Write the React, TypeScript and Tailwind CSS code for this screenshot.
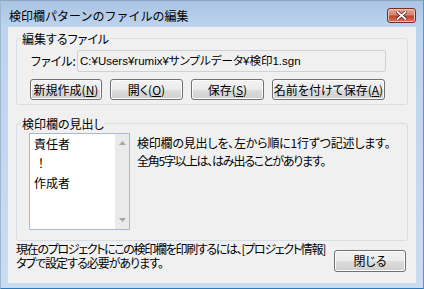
import { ReactNode } from "react";

function Mnemonic({ text, k }: { text: string; k: string }) {
  return (
    <>
      {text}(<span className="underline underline-offset-[1px]">{k}</span>)
    </>
  );
}

function Button({ children, className = "" }: { children: ReactNode; className?: string }) {
  return (
    <button
      type="button"
      className={`flex shrink-0 items-center justify-center rounded-[3px] border border-[#707070] bg-[linear-gradient(#f2f2f2_0%,#ebebeb_50%,#dddddd_50%,#cfcfcf_100%)] leading-[14px] shadow-[inset_0_0_0_1px_#fcfcfc] ${className}`}
    >
      {children}
    </button>
  );
}

function CloseButton() {
  return (
    <div className="mr-[7px] mt-[7px] flex h-[15px] w-[29px] shrink-0 items-center justify-center rounded-[3px] border border-[#7a2c22] bg-[linear-gradient(#e9a99b_0%,#d9826e_45%,#c2432c_55%,#d8765e_100%)] shadow-[inset_0_0_0_1px_#eec0b5]">
      <svg width="11" height="9" viewBox="0 0 11 9">
        <path d="M1.5 1 L9.5 8 M9.5 1 L1.5 8" stroke="#5a1d15" strokeWidth="3.4" strokeLinecap="square" />
        <path d="M1.5 1 L9.5 8 M9.5 1 L1.5 8" stroke="#ffffff" strokeWidth="1.8" strokeLinecap="square" />
      </svg>
    </div>
  );
}

function Scrollbar() {
  return (
    <div className="flex h-full w-[14px] shrink-0 flex-col items-center justify-between bg-[#eaeaea] py-[7px]">
      <svg width="7" height="4" viewBox="0 0 7 4">
        <path d="M0 4 L3.5 0 L7 4 Z" fill="#a6a6a6" />
      </svg>
      <svg width="7" height="4" viewBox="0 0 7 4">
        <path d="M0 0 L3.5 4 L7 0 Z" fill="#a6a6a6" />
      </svg>
    </div>
  );
}

export default function App() {
  return (
    <div className="flex h-[289px] w-[424px] flex-col border border-t-[#8fa5bd] border-l-[#9fb6d0] border-r-[#3aa2dc] border-b-[#2b79b8] bg-[linear-gradient(#a9c3e2,#bdd4ee_26px,#c9dcf1)] font-['Noto_Sans_CJK_JP',sans-serif] text-[12px] text-black">
      <div className="flex h-[26px] shrink-0 items-start justify-between">
        <span className="ml-[8px] mt-[8px] leading-[14px]">検印欄パターンのファイルの編集</span>
        <CloseButton />
      </div>

      <div className="mx-[7px] flex h-[256px] shrink-0 flex-col bg-[#f0f0f0] [font-feature-settings:'palt']">
        <fieldset className="mx-[8px] mt-[5px] rounded-[3px] border border-[#d5dfe5] px-0 pb-[4px] pt-[5px]">
          <legend className="ml-[4px] px-[1px] leading-[13px]">編集するファイル</legend>
          <div className="flex h-[22px] items-center pl-[14px]">
            <span className="w-[46px] shrink-0 leading-[14px]">ファイル:</span>
            <div className="flex h-[22px] w-[309px] items-center rounded-[2px] border border-[#cdd1d6] pl-[2px] font-['Liberation_Sans','Noto_Sans_CJK_JP',sans-serif] text-[11.5px] leading-[14px]">
              C:¥Users¥rumix¥サンプルデータ¥検印1.sgn
            </div>
          </div>
          <div className="mt-[7px] flex gap-[8px] pl-[13px]">
            <Button className="h-[21px] w-[72px]">
              <Mnemonic text="新規作成" k="N" />
            </Button>
            <Button className="h-[21px] w-[73px]">
              <Mnemonic text="開く" k="O" />
            </Button>
            <Button className="h-[21px] w-[73px]">
              <Mnemonic text="保存" k="S" />
            </Button>
            <Button className="h-[21px] w-[113px]">
              <Mnemonic text="名前を付けて保存" k="A" />
            </Button>
          </div>
        </fieldset>

        <fieldset className="mx-[8px] mt-[12px] rounded-[3px] border border-[#d5dfe5] px-0 pb-[10px] pt-[3px]">
          <legend className="ml-[4px] px-[1px] leading-[13px]">検印欄の見出し</legend>
          <div className="flex pl-[12px]">
            <div className="flex h-[97px] w-[101px] shrink-0 border border-[#a7bcd3] bg-white">
              <div className="flex-1 pl-[4px] pt-[3px] leading-[13px]">
                <div>責任者</div>
                <div className="h-[26px] pl-[4px] pt-[6px]">！</div>
                <div>作成者</div>
              </div>
              <Scrollbar />
            </div>
            <div className="ml-[7px] mt-[1px] whitespace-nowrap leading-[18px]">
              <p className="tracking-[-0.2px]">検印欄の見出しを、左から順に1行ずつ記述します。</p>
              <p className="tracking-[-1.2px]">全角5字以上は、はみ出ることがあります。</p>
            </div>
          </div>
        </fieldset>

        <div className="mt-[1px] flex items-start justify-between pl-[8px] pr-[10px]">
          <p className="whitespace-nowrap leading-[14px]">
            <span className="tracking-[-1.3px]">現在のプロジェクトにこの検印欄を印刷するには、[プロジェクト情報]</span>
            <br />
            <span className="tracking-[-1px]">タブで設定する必要があります。</span>
          </p>
          <Button className="mt-[8px] h-[22px] w-[72px]">閉じる</Button>
        </div>
      </div>
    </div>
  );
}
